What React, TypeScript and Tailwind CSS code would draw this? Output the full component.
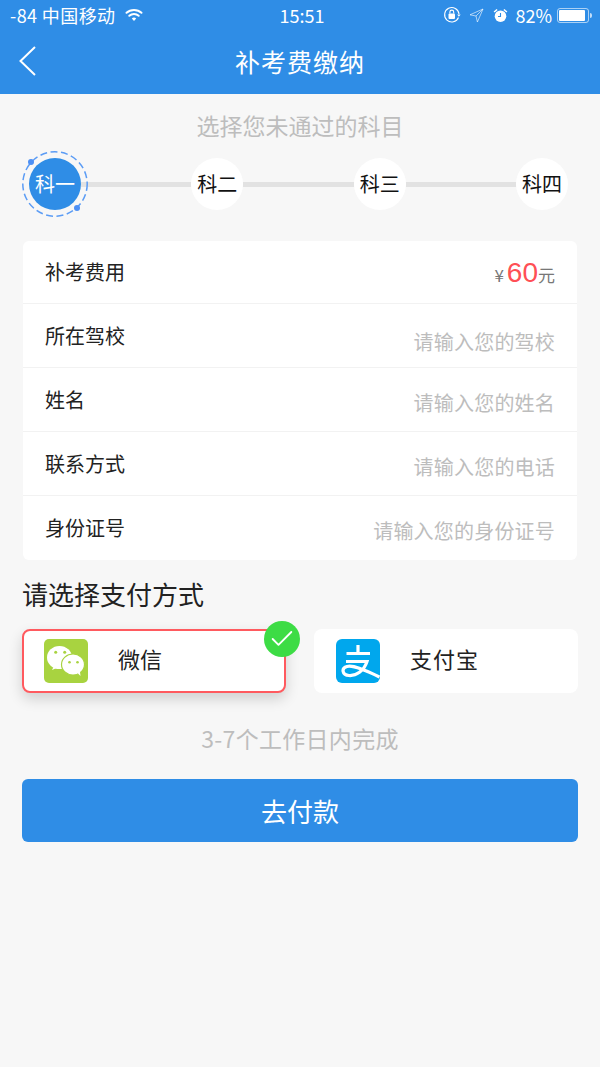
import { Check } from "lucide-react";

const FONT = "font-['Noto_Sans_CJK_SC','Noto_Sans',sans-serif]";

const rows = [
  { label: "所在驾校", hint: "请输入您的驾校", hintClass: "pt-[23px]" },
  { label: "姓名", hint: "请输入您的姓名", hintClass: "pt-[20px]" },
  { label: "联系方式", hint: "请输入您的电话", hintClass: "pt-[20px]" },
  { label: "身份证号", hint: "请输入您的身份证号", hintClass: "pt-[20px]" },
];

function StatusBar() {
  return (
    <div className="flex h-[30px] items-center justify-between pl-[10px] pr-[8px] text-[18px] leading-none text-white">
      <div className="flex w-[200px] items-center gap-[10px]">
        <span className="tracking-[0.4px]">-84 中国移动</span>
        <svg width="18" height="14" viewBox="0 0 18 14" fill="none" stroke="white" strokeWidth="2" strokeLinecap="round">
          <path d="M1.5 4.8C5.6 1 12.4 1 16.500 4.8" />
          <path d="M4.3 7.7C6.9 5.3 11.1 5.3 13.7 7.7" />
          <path d="M9 13 L6.8 10.4C8 9.3 10 9.3 11.2 10.4Z" fill="white" stroke="none" />
        </svg>
      </div>
      <span className="ml-[2px]">15:51</span>
      <div className="flex w-[200px] items-center justify-end">
        <svg className="mr-[8px]" width="18" height="18" viewBox="0 0 18 18" fill="none" stroke="white">
          <path d="M15.5 11.5A7.2 7.2 0 1 1 16 8" strokeWidth="1.1" />
          <path d="M14.2 8.5h3.4l-1.7 2.200z" fill="white" stroke="none" />
          <rect x="5.5" y="7.5" width="6.5" height="5.5" rx="1" fill="white" stroke="none" />
          <path d="M6.9 7.5V6a1.9 1.9 0 0 1 3.8 0v1.5" strokeWidth="1.1" />
        </svg>
        <svg className="mr-[9px]" width="15" height="15" viewBox="0 0 15 15" fill="none" stroke="white" strokeOpacity="0.6" strokeWidth="1">
          <path d="M14 1 1 6.8l6 1.2 1.4 6z" strokeLinejoin="round" />
          <path d="M14 1 7 8" />
        </svg>
        <svg className="mr-[7px]" width="15" height="15" viewBox="0 0 15 15" fill="white">
          <circle cx="7.5" cy="8.2" r="5.8" />
          <path d="M0.6 3.6 3.6 1l1 1-3 2.6zM14.4 3.6 11.4 1l-1 1 3 2.6z" />
          <path d="M7.5 5v3.5H5" fill="none" stroke="#2f8de6" strokeWidth="1.1" />
        </svg>
        <span className="mr-[5px]">82%</span>
        <div className="flex h-[15px] w-[32px] rounded-[3px] border border-white/60 p-[1px]">
          <div className="h-full w-[26px] rounded-[1px] bg-white" />
        </div>
        <div className="ml-[1px] h-[5px] w-[2px] rounded-r-sm bg-white/70" />
      </div>
    </div>
  );
}

function Step({ label, active }: { label: string; active?: boolean }) {
  return (
    <div
      className={`relative flex h-[52px] w-[52px] shrink-0 items-center justify-center rounded-full text-[20px] ${
        active ? "bg-[#2f8de6] text-white" : "bg-white text-[#111]"
      }`}
    >
      {label}
      {active && (
        <svg className="absolute left-[-7px] top-[-7px]" width="66" height="66" viewBox="0 0 66 66" fill="none">
          <circle cx="33" cy="33" r="32.200" stroke="#5b9cf5" strokeWidth="1.500" strokeDasharray="7 3.500" />
          <circle cx="9" cy="11" r="3" fill="#4d90f5" />
          <circle cx="55" cy="57" r="3" fill="#4d90f5" />
        </svg>
      )}
    </div>
  );
}

function Line() {
  return <div className="h-[5px] flex-1 bg-[#e2e2e2]" />;
}

function WechatIcon() {
  return (
    <svg width="44" height="44" viewBox="0 0 44 44">
      <rect width="44" height="44" rx="5" fill="#a8d340" />
      <ellipse cx="15.5" cy="18.500" rx="12.500" ry="11.500" fill="white" />
      <path d="M10 27 8 31l6-2.500z" fill="white" />
      <circle cx="11.700" cy="13.300" r="1.500" fill="#a8d340" />
      <circle cx="20.700" cy="13.300" r="1.500" fill="#a8d340" />
      <ellipse cx="29" cy="25.500" rx="11.500" ry="10.500" fill="white" stroke="#a8d340" strokeWidth="1.200" />
      <path d="M33 33.500 36.500 37l-.6-5z" fill="white" />
      <circle cx="25.500" cy="23.300" r="1.300" fill="#a8d340" />
      <circle cx="33.500" cy="23.300" r="1.300" fill="#a8d340" />
    </svg>
  );
}

function AlipayIcon() {
  return (
    <svg width="44" height="44" viewBox="0 0 44 44">
      <rect width="44" height="44" rx="6" fill="#00a7ed" />
      <path
        d="M10.500 14.500h23.500M22 6v8.500M10 22.500h21C28 32 20 37 13 36.500 6 36 5 29 11 27.500 17 26 27 30 43.500 38"
        fill="none"
        stroke="white"
        strokeWidth="3.200"
      />
    </svg>
  );
}

export default function App() {
  return (
    <div className={`flex min-h-[1067px] w-[600px] flex-col bg-[#f7f7f7] ${FONT}`}>
      <header className="h-[94px] bg-[#2f8de6]">
        <StatusBar />
        <div className="relative flex h-[64px] items-center justify-center text-[25px] text-white">
          <svg className="absolute left-[18px] top-[15px]" width="20" height="32" viewBox="0 0 20 32" fill="none" stroke="white" strokeWidth="2">
            <path d="M17 2 2.500 16 17 30" />
          </svg>
          <span className="tracking-[1px]">补考费缴纳</span>
        </div>
      </header>

      <p className="mt-[14px] text-center text-[23px] leading-[34px] text-[#bdbdbd]">选择您未通过的科目</p>

      <div className="mt-[16px] flex items-center pl-[29px] pr-[32px]">
        <Step label="科一" active />
        <Line />
        <Step label="科二" />
        <Line />
        <Step label="科三" />
        <Line />
        <Step label="科四" />
      </div>

      <div className="mx-[23px] mt-[31px] divide-y divide-[#f2f2f2] rounded-md bg-white">
        <div className="flex h-[63px] items-center justify-between px-[22px]">
          <span className="text-[20px] text-[#222]">补考费用</span>
          <span className="flex items-baseline pt-[1px] text-[#777]">
            <span className="mr-[3px] text-[17px]">¥</span>
            <span className="font-['Liberation_Sans',sans-serif] text-[28px] text-[#ff4f55]">60</span>
            <span className="text-[17px]">元</span>
          </span>
        </div>
        {rows.map((row) => (
          <div key={row.label} className="flex h-[64px] justify-between px-[22px]">
            <span className="pt-[17px] text-[20px] text-[#222]">{row.label}</span>
            <span className={`${row.hintClass} text-[20px] tracking-[0.2px] text-[#bdbdbd]`}>{row.hint}</span>
          </div>
        ))}
      </div>

      <h2 className="mt-[14px] pl-[22px] text-[26px] leading-[40px] text-[#222]">请选择支付方式</h2>

      <div className="mx-[22px] mt-[15px] flex justify-between">
        <div className="relative flex h-[64px] w-[264px] items-center rounded-lg border-2 border-[#ff5a5f] bg-white pl-[20px] text-[22px] text-[#222] shadow-[0_6px_14px_rgba(0,0,0,0.16)]">
          <WechatIcon />
          <span className="mb-[6px] ml-[30px]">微信</span>
          <div className="absolute right-[-16px] top-[-10px] flex h-[36px] w-[36px] items-center justify-center rounded-full bg-[#3ddc45]">
            <Check className="text-white" size={28} strokeWidth={1.6} />
          </div>
        </div>
        <div className="flex h-[64px] w-[264px] items-center rounded-lg bg-white pl-[22px] text-[22px] text-[#222]">
          <AlipayIcon />
          <span className="mb-[6px] ml-[30px] tracking-[1px]">支付宝</span>
        </div>
      </div>

      <p className="mt-[28px] text-center text-[23px] leading-[34px] tracking-[0.3px] text-[#bdbdbd]">3-7个工作日内完成</p>

      <button className="mx-[22px] mt-[24px] h-[63px] rounded-md bg-[#2f8de6] text-[26px] text-white">去付款</button>
    </div>
  );
}
